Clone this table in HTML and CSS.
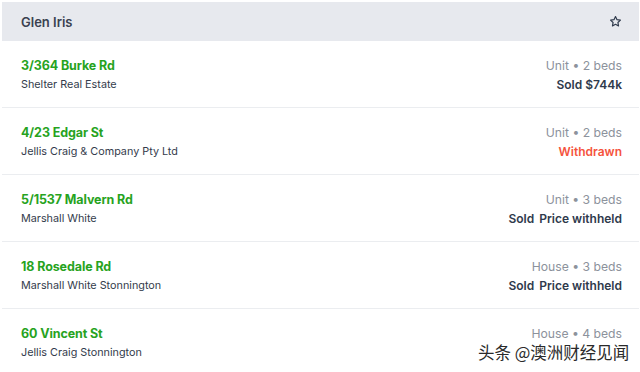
FILE: index.html
```html
<!DOCTYPE html>
<html>
<head>
<meta charset="utf-8">
<link rel="stylesheet" href="styles.css">
</head>
<body>
<div class="panel">
  <div class="header">
    <span class="title">Glen Iris</span>
    <svg class="star" width="13" height="13" viewBox="0 0 24 24"><path d="M12 2.8l2.8 5.8 6.3.9-4.6 4.4 1.1 6.3L12 17.2l-5.6 3 1.1-6.3-4.6-4.4 6.3-.9z" fill="none" stroke="#2f3a4c" stroke-width="2.2" stroke-linejoin="round"/></svg>
  </div>
  <div class="row">
    <div class="left"><div class="addr">3/364 Burke Rd</div><div class="agency">Shelter Real Estate</div></div>
    <div class="right"><div class="meta">Unit • 2 beds</div><div class="status">Sold $744k</div></div>
  </div>
  <div class="row">
    <div class="left"><div class="addr">4/23 Edgar St</div><div class="agency">Jellis Craig &amp; Company Pty Ltd</div></div>
    <div class="right"><div class="meta">Unit • 2 beds</div><div class="status red">Withdrawn</div></div>
  </div>
  <div class="row">
    <div class="left"><div class="addr">5/1537 Malvern Rd</div><div class="agency">Marshall White</div></div>
    <div class="right"><div class="meta">Unit • 3 beds</div><div class="status"><span>Sold</span><span>Price withheld</span></div></div>
  </div>
  <div class="row">
    <div class="left"><div class="addr">18 Rosedale Rd</div><div class="agency">Marshall White Stonnington</div></div>
    <div class="right"><div class="meta">House • 3 beds</div><div class="status"><span>Sold</span><span>Price withheld</span></div></div>
  </div>
  <div class="row last">
    <div class="left"><div class="addr">60 Vincent St</div><div class="agency">Jellis Craig Stonnington</div></div>
    <div class="right"><div class="meta">House • 4 beds</div></div>
  </div>
  <div class="watermark">头条 @澳洲财经见闻</div>
</div>
</body>
</html>
```
FILE: styles.css
```css
html, body {
  margin: 0;
  padding: 0;
  background: #ffffff;
}
body {
  font-family: Inter, "Noto Sans", sans-serif;
  color: #2e3a4b;
  width: 640px;
  height: 372px;
  overflow: hidden;
}
.panel {
  position: relative;
  padding: 2px 1px 0 2px;
}
.header {
  height: 39px;
  background: #e7e9ee;
  display: flex;
  align-items: center;
  justify-content: space-between;
  padding: 0 17px 0 19px;
}
.title {
  font-size: 13px;
  font-weight: 600;
  color: #3a4150;
}
.star {
  display: block;
}
.row {
  height: 49px;
  border-bottom: 1px solid #ebedf0;
  display: flex;
  justify-content: space-between;
  align-items: flex-start;
  padding: 17px 17px 0 19px;
}
.left, .right {
  display: flex;
  flex-direction: column;
  gap: 5px;
}
.right {
  align-items: flex-end;
}
.addr {
  font-size: 12.5px;
  font-weight: 650;
  color: #27a31e;
  line-height: 15px;
  letter-spacing: -0.1px;
}
.agency {
  font-size: 10.8px;
  color: #343c4c;
  line-height: 14px;
}
.meta {
  font-size: 12.2px;
  color: #8c929c;
  line-height: 15px;
}
.status {
  font-size: 12px;
  font-weight: 600;
  color: #2f3a4c;
  line-height: 14px;
  display: flex;
  gap: 5px;
}
.status.red {
  color: #f5533d;
}
.watermark {
  position: absolute;
  left: 478px;
  top: 340px;
  font-family: "Noto Sans CJK SC", sans-serif;
  font-size: 16.5px;
  line-height: 24px;
  color: #2a2a2a;
  text-shadow: 0 0 2px #fff, 0 0 2px #fff;
}
```
